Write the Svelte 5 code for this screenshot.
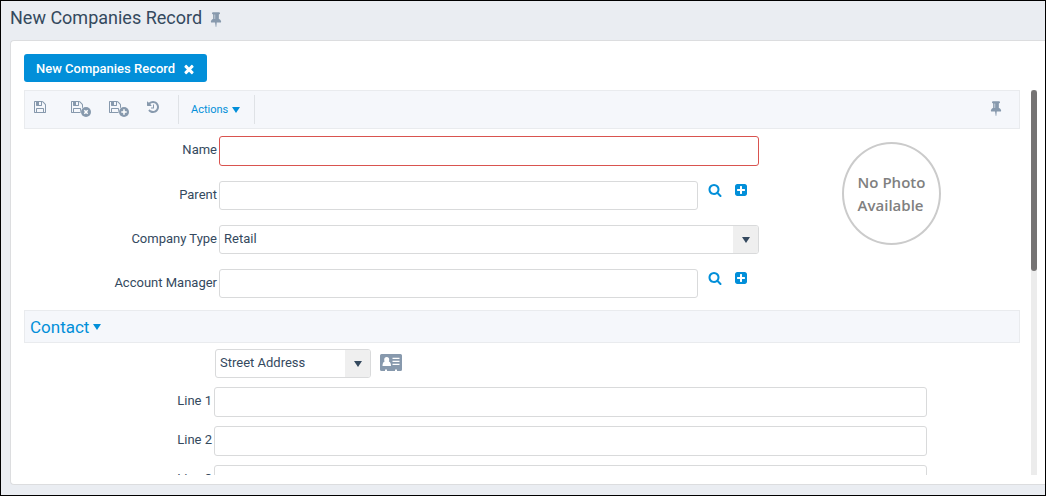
<script>
  const icons = {
    save: 'M512 1536h768v-384h-768v384zm896 0h128v-896q0-14-10-38.500t-20-34.500l-281-281q-10-10-34-20t-39-10v416q0 40-28 68t-68 28h-576q-40 0-68-28t-28-68v-416h-128v1280h128v-416q0-40 28-68t68-28h832q40 0 68 28t28 68v416zm-384-928v-320q0-13-9.500-22.500t-22.500-9.500h-192q-13 0-22.500 9.500t-9.500 22.500v320q0 13 9.500 22.500t22.500 9.500h192q13 0 22.500-9.500t9.500-22.500zm640 32v928q0 40-28 68t-68 28h-1344q-40 0-68-28t-28-68v-1344q0-40 28-68t68-28h928q40 0 88 20t76 48l280 280q28 28 48 76t20 88z',
    history: 'M1664 896q0 156-61 298t-164 245-245 164-298 61q-172 0-327-72.500t-264-204.500q-7-10-6.500-22.500t8.500-20.500l137-138q10-9 25-9 16 2 23 12 73 95 179 147t225 52q104 0 198.500-40.500t163.500-109.500 109.500-163.500 40.500-198.500-40.500-198.500-109.500-163.500-163.500-109.500-198.500-40.500q-98 0-188 35.500t-160 101.500l137 138q31 30 14 69-17 40-59 40h-448q-26 0-45-19t-19-45v-448q0-42 40-59 39-17 69 14l130 129q107-101 244.500-156.500t284.500-55.500q156 0 298 61t245 164 164 245 61 298zm-640-288v448q0 14-9 23t-23 9h-320q-14 0-23-9t-9-23v-64q0-14 9-23t23-9h224v-352q0-14 9-23t23-9h64q14 0 23 9t9 23z',
    pin: 'M800 864v-448q0-14-9-23t-23-9-23 9-9 23v448q0 14 9 23t23 9 23-9 9-23zm672 352q0 26-19 45t-45 19h-429l-51 483q-2 12-10.500 20.500t-20.500 8.500h-1q-27 0-32-27l-76-485h-404q-26 0-45-19t-19-45q0-123 78.500-221.500t177.500-98.500v-512q-52 0-90-38t-38-90 38-90 90-38h640q52 0 90 38t38 90-38 90-90 38v512q99 0 177.500 98.500t78.500 221.500z',
    search: 'M1216 832q0-185-131.500-316.500t-316.500-131.500-316.500 131.500-131.500 316.500 131.500 316.500 316.500 131.500 316.500-131.500 131.500-316.500zm512 832q0 52-38 90t-90 38q-54 0-90-38l-343-342q-179 124-399 124-143 0-273.500-55.500t-225-150-150-225-55.500-273.500 55.500-273.500 150-225 225-150 273.500-55.500 273.500 55.500 225 150 150 225 55.500 273.500q0 220-124 399l343 343q37 37 37 90z',
    plus: 'M1408 960v-128q0-26-19-45t-45-19h-320v-320q0-26-19-45t-45-19h-128q-26 0-45 19t-19 45v320h-320q-26 0-45 19t-19 45v128q0 26 19 45t45 19h320v320q0 26 19 45t45 19h128q26 0 45-19t19-45v-320h320q26 0 45-19t19-45zm256-544v960q0 119-84.500 203.500t-203.500 84.500h-960q-119 0-203.500-84.500t-84.500-203.500v-960q0-119 84.500-203.500t203.500-84.500h960q119 0 203.500 84.500t84.500 203.500z',
    close: 'M1490 1322q0 40-28 68l-136 136q-28 28-68 28t-68-28l-294-294-294 294q-28 28-68 28t-68-28l-136-136q-28-28-28-68t28-68l294-294-294-294q-28-28-28-68t28-68l136-136q28-28 68-28t68 28l294 294 294-294q28-28 68-28t68 28l136 136q28 28 28 68t-28 68l-294 294 294 294q28 28 28 68z'
  };
  const addressLines = [1, 2, 3];
  let companyType = $state('Retail');
  let addressType = $state('Street Address');
</script>

{#snippet icon(name)}
  <svg class="icon" viewBox="0 0 1792 1792" aria-hidden="true"><path d={icons[name]} /></svg>
{/snippet}

{#snippet saveWith(mark)}
  <svg class="save-badge" viewBox="0 0 21 17" aria-hidden="true">
    <svg width="14" height="14" viewBox="0 0 1792 1792"><path d={icons.save} /></svg>
    <circle cx="16" cy="12" r="5.500" class="halo" />
    <circle cx="16" cy="12" r="5" />
    <path class="mark" d={mark} />
  </svg>
{/snippet}

{#snippet caret()}
  <svg class="caret" viewBox="0 0 8 6" aria-hidden="true"><path d="M0 0h8L4 6z" /></svg>
{/snippet}

{#snippet lookup(id, label)}
  <label for={id}>{label}</label>
  <div class="lookup">
    <input {id} type="text" />
    <button type="button" aria-label="Search {label}">{@render icon('search')}</button>
    <button type="button" aria-label="Add {label}">{@render icon('plus')}</button>
  </div>
{/snippet}

<div class="app">
  <header>
    <h1>New Companies Record</h1>
    <button type="button" class="muted" aria-label="Pin page">{@render icon('pin')}</button>
  </header>

  <main>
    <div class="tab">
      <span>New Companies Record</span>
      <button type="button" aria-label="Close tab">{@render icon('close')}</button>
    </div>

    <div class="viewport">
      <div class="scroller">
        <div class="toolbar">
          <div class="tools muted">
            <button type="button" aria-label="Save">{@render icon('save')}</button>
            <button type="button" aria-label="Save and close">{@render saveWith('M14.300 10.300l3.400 3.400m0-3.400l-3.400 3.400')}</button>
            <button type="button" aria-label="Save and new">{@render saveWith('M16 9.300v5.400M13.300 12h5.400')}</button>
            <button type="button" aria-label="History">{@render icon('history')}</button>
          </div>
          <button type="button" class="actions">Actions {@render caret()}</button>
          <button type="button" class="pin muted" aria-label="Pin toolbar">{@render icon('pin')}</button>
        </div>

        <div class="record">
          <div class="fields">
            <label for="name">Name</label>
            <input id="name" class="required" type="text" required />
            {@render lookup('parent', 'Parent')}
            <label for="type">Company Type</label>
            <div class="select">
              <select id="type" bind:value={companyType}>
                <option>Retail</option>
              </select>
              <span class="arrow">{@render caret()}</span>
            </div>
            {@render lookup('manager', 'Account Manager')}
          </div>
          <div class="photo">No Photo<br />Available</div>
        </div>

        <h2><button type="button">Contact {@render caret()}</button></h2>

        <div class="address">
          <div class="address-type">
            <div class="select">
              <select aria-label="Address type" bind:value={addressType}>
                <option>Street Address</option>
              </select>
              <span class="arrow">{@render caret()}</span>
            </div>
            <button type="button" class="muted" aria-label="Address card">
              <svg class="card" viewBox="0 0 22 17" aria-hidden="true">
                <path d="M1.500 0h19A1.500 1.500 0 0 1 22 1.500v14a1.500 1.500 0 0 1-1.500 1.500H17v-1.500h-2V17H7v-1.500H5V17H1.500A1.500 1.500 0 0 1 0 15.500v-14A1.500 1.500 0 0 1 1.500 0z" />
                <path class="cut" d="M6.700 3a2.500 2.700 0 1 1 0 5.400 2.500 2.700 0 0 1 0-5.400zM4.600 7.500q2.100 1.800 4.200 0Q11 8.300 11 12H2.500q0-3.700 2.100-4.500zM12.500 3.700h7V5h-7zM12.500 6.700h7V8h-7zM12.500 9.700h7V11h-7z" />
              </svg>
            </button>
          </div>
          {#each addressLines as n}
            <label for="line{n}">Line {n}</label>
            <input id="line{n}" type="text" />
          {/each}
        </div>
      </div>
      <div class="track" aria-hidden="true"><div class="thumb"></div></div>
    </div>
  </main>
</div>

<style>
  :global(body) {
    margin: 0;
  }
  .app,
  .app * {
    box-sizing: border-box;
  }
  .app {
    height: 100vh;
    display: flex;
    flex-direction: column;
    border: 1px solid #000;
    background: #eaedf2;
    color: #34495e;
    font: 13px/16px Roboto, sans-serif;
  }
  button {
    display: flex;
    align-items: center;
    padding: 0;
    border: 0;
    background: none;
    color: #028fd9;
    font: inherit;
    cursor: pointer;
  }
  svg {
    display: block;
    fill: currentColor;
  }
  .icon {
    width: 14px;
    height: 14px;
  }
  .caret {
    width: 8px;
    height: 6px;
  }
  .muted,
  .muted button {
    color: #8799ad;
  }
  header {
    display: flex;
    align-items: center;
    gap: 6px;
    height: 39px;
    padding: 0 9px 5px;
  }
  header .icon,
  .pin .icon {
    width: 16px;
    height: 16px;
  }
  header button {
    padding-top: 2px;
  }
  h1 {
    margin: 0;
    font-size: 18px;
    line-height: 24px;
    font-weight: 400;
  }
  main {
    flex: 1;
    min-height: 0;
    display: flex;
    flex-direction: column;
    align-items: stretch;
    gap: 8px;
    margin: 0 0 10px 9px;
    padding: 13px 8px 9px 13px;
    border: 1px solid #dcdddf;
    border-right: 0;
    border-radius: 4px 0 0 4px;
    background: #fff;
  }
  .tab {
    align-self: flex-start;
    display: flex;
    align-items: center;
    gap: 7px;
    height: 28px;
    padding: 1px 11px 0 12px;
    border-radius: 3px;
    background: #028fd9;
    color: #fff;
    font-weight: 500;
  }
  .tab button {
    color: #fff;
  }
  .viewport {
    flex: 1;
    min-height: 0;
    display: flex;
    gap: 11px;
  }
  .scroller {
    flex: 1;
    min-width: 0;
    overflow-y: auto;
    scrollbar-width: none;
  }
  .track {
    width: 6px;
    background: #ececec;
  }
  .thumb {
    height: 47%;
    border-radius: 3px;
    background: #757373;
  }
  .toolbar {
    display: flex;
    align-items: center;
    height: 39px;
    padding: 0 15px 0 8px;
    border: 1px solid #e9ebee;
    background: #f5f7fb;
  }
  .tools {
    display: flex;
    align-items: flex-start;
    gap: 17px;
    padding: 0 18px 2px 0;
  }
  .tools button:first-child {
    margin-right: 6px;
  }
  .save-badge {
    width: 21px;
    height: 17px;
  }
  .halo {
    fill: #f5f7fb;
  }
  .mark {
    fill: none;
    stroke: #fff;
    stroke-width: 1.5;
  }
  .actions {
    gap: 4px;
    height: 29px;
    padding: 0 14px 0 12px;
    border: solid #dfe2e6;
    border-width: 0 1px;
    font-size: 11px;
  }
  .pin {
    margin-left: auto;
    padding-bottom: 4px;
  }
  .record {
    display: grid;
    grid-template-columns: minmax(0, 735fr) minmax(0, 261fr);
    padding: 7px 0 12px;
  }
  .fields {
    display: grid;
    grid-template-columns: 193px minmax(0, 1fr);
    gap: 15px 2px;
    align-items: center;
  }
  label {
    text-align: right;
    padding-bottom: 2px;
  }
  input,
  select {
    width: 100%;
    min-width: 0;
    height: 30px;
    padding: 0 4px;
    border: 1px solid #d9dadb;
    border-radius: 3px;
    background: #fff;
    color: inherit;
    font: inherit;
  }
  .lookup input,
  select {
    height: 29px;
  }
  .required {
    border-color: #d9534f;
  }
  .lookup {
    display: flex;
    gap: 12px;
    padding-right: 11px;
  }
  .lookup input {
    margin-right: -2px;
  }
  .lookup button {
    flex: none;
    padding-bottom: 12px;
  }
  .select {
    display: grid;
  }
  select {
    grid-area: 1 / 1;
    padding-bottom: 1px;
    appearance: none;
  }
  .arrow {
    grid-area: 1 / 1;
    justify-self: end;
    display: grid;
    place-items: center;
    width: 25px;
    margin: 1px;
    border-radius: 0 2px 2px 0;
    background: #efefef;
    pointer-events: none;
  }
  .photo {
    display: grid;
    place-content: center;
    width: 99px;
    height: 103px;
    margin: 6px 0 0 83px;
    border: 2px solid #cbcbcb;
    border-radius: 50%;
    color: #808080;
    font: 600 15px/23px "Open Sans", sans-serif;
  }
  h2 {
    display: flex;
    height: 33px;
    margin: 0;
    padding: 0 5px;
    border: 1px solid #e9ebee;
    background: #f5f7fb;
    font-size: 17px;
    line-height: 24px;
    font-weight: 400;
  }
  h2 button {
    gap: 4px;
  }
  .address {
    display: grid;
    grid-template-columns: 188px minmax(0, 1fr);
    gap: 9px 2px;
    align-items: center;
    padding: 6px 93px 0 0;
  }
  .address-type {
    grid-column: 2;
    display: flex;
    align-items: center;
    gap: 9px;
    padding-left: 1px;
  }
  .address-type .select {
    width: 156px;
  }
  .address-type button {
    padding-bottom: 2px;
  }
  .card {
    width: 22px;
    height: 17px;
  }
  .cut {
    fill: #fff;
  }
</style>
